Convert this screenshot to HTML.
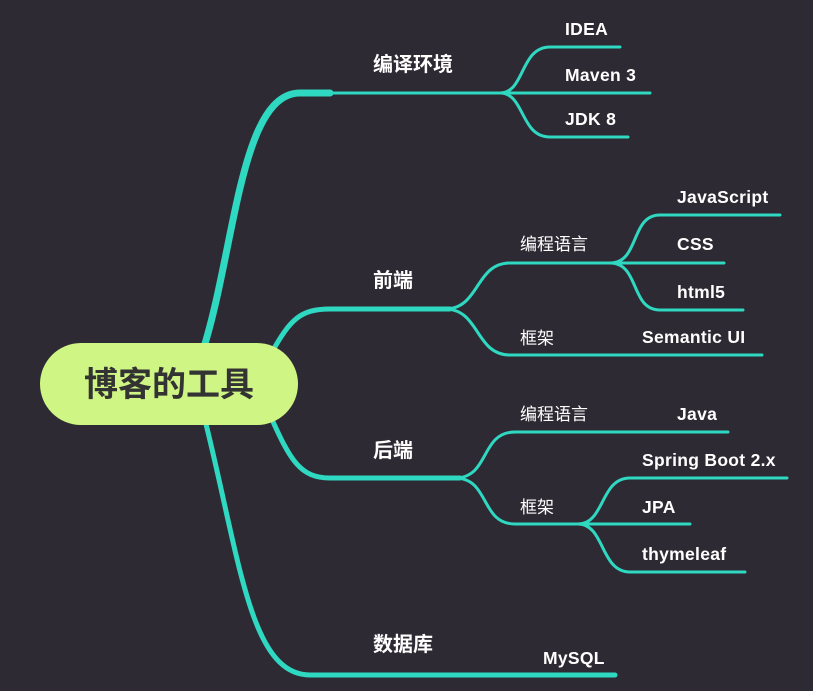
<!DOCTYPE html>
<html><head><meta charset="utf-8"><style>
html,body{margin:0;padding:0;background:#2e2a33;}
svg{display:block}
text{font-family:"Liberation Sans","Noto Sans CJK SC",sans-serif;fill:#fff}
.b{font-weight:bold;font-size:17.5px;letter-spacing:0.3px}
.m{font-weight:bold;font-size:20px}
.n{font-size:17px}
</style></head><body>
<svg width="813" height="691" viewBox="0 0 813 691" xmlns="http://www.w3.org/2000/svg">
<rect width="813" height="691" fill="#2e2a33"/>
<g fill="none" stroke="#2ed8c1" stroke-linecap="round">
<path d="M203,350 C235,250 240,93 300,93 L330,93" stroke-width="7"/>
<path d="M320,93 L500,93" stroke-width="3"/>
<path d="M272,352 C290,320 300,309 330,309 L450,309" stroke-width="5"/>
<path d="M270,415 C290,460 300,478 330,478 L460,478" stroke-width="5"/>
<path d="M205,420 C240,560 250,675 310,675 L615,675" stroke-width="5"/>
<g stroke-width="3">
<path d="M500,93 C525,93 520,47 550,47 L620,47"/>
<path d="M500,93 L650,93"/>
<path d="M500,93 C525,93 520,137 550,137 L628,137"/>
<path d="M445,309 C480,309 475,263 510,263 L610,263"/>
<path d="M445,309 C480,309 475,355 510,355 L762,355"/>
<path d="M610,263 C640,263 630,215 660,215 L780,215"/>
<path d="M610,263 L724,263"/>
<path d="M610,263 C640,263 630,310 660,310 L743,310"/>
<path d="M455,478 C490,478 480,432 515,432 L728,432"/>
<path d="M455,478 C490,478 480,524 515,524 L580,524"/>
<path d="M578,524 C605,524 600,478 630,478 L787,478"/>
<path d="M578,524 L690,524"/>
<path d="M578,524 C605,524 600,572 630,572 L745,572"/>
</g>
</g>
<rect x="40" y="343" width="258" height="82" rx="41" fill="#cff584"/>
<text x="169" y="396" text-anchor="middle" style="font-weight:bold;font-size:34px;fill:#333">博客的工具</text>
<text class="m" x="373" y="71">编译环境</text>
<text class="m" x="373" y="287">前端</text>
<text class="m" x="373" y="457">后端</text>
<text class="m" x="373" y="651">数据库</text>
<text class="b" x="565" y="35">IDEA</text>
<text class="b" x="565" y="81">Maven 3</text>
<text class="b" x="565" y="125">JDK 8</text>
<text class="n" x="520" y="250">编程语言</text>
<text class="n" x="520" y="344">框架</text>
<text class="b" x="677" y="203">JavaScript</text>
<text class="b" x="677" y="250">CSS</text>
<text class="b" x="677" y="298">html5</text>
<text class="b" x="642" y="343">Semantic UI</text>
<text class="n" x="520" y="420">编程语言</text>
<text class="n" x="520" y="513">框架</text>
<text class="b" x="677" y="420">Java</text>
<text class="b" x="642" y="466">Spring Boot 2.x</text>
<text class="b" x="642" y="513">JPA</text>
<text class="b" x="642" y="560">thymeleaf</text>
<text class="b" x="543" y="664">MySQL</text>
</svg>
</body></html>
